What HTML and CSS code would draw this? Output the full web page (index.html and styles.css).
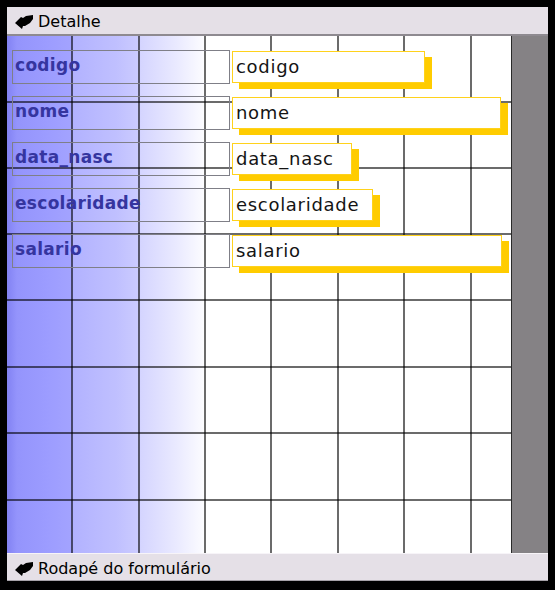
FILE: index.html
```html
<!DOCTYPE html>
<html lang="pt">
<head>
<meta charset="utf-8">
<title>Detalhe</title>
<link rel="stylesheet" href="styles.css">
</head>
<body>
<div class="frame">
  <div class="section-bar section-bar--top">
    <svg class="bar-icon" width="18" height="14" viewBox="0 0 18 14"><path d="M0 8 L6 2 L8 3 L11 1 L18 0 L18 4 L15 8 L10 11 L8 11 L7 14 Z" fill="#000"/></svg>
    <span class="bar-title">Detalhe</span>
  </div>
  <div class="canvas">
    <div class="grid">
      <div class="controls">
        <div class="row"><div class="label">codigo</div><div class="field field--codigo">codigo</div></div>
        <div class="row"><div class="label">nome</div><div class="field field--nome">nome</div></div>
        <div class="row"><div class="label">data_nasc</div><div class="field field--data">data_nasc</div></div>
        <div class="row"><div class="label">escolaridade</div><div class="field field--escol">escolaridade</div></div>
        <div class="row"><div class="label">salario</div><div class="field field--salario">salario</div></div>
      </div>
    </div>
    <div class="gutter"></div>
  </div>
  <div class="section-bar section-bar--bottom">
    <svg class="bar-icon" width="18" height="14" viewBox="0 0 18 14"><path d="M0 8 L6 2 L8 3 L11 1 L18 0 L18 4 L15 8 L10 11 L8 11 L7 14 Z" fill="#000"/></svg>
    <span class="bar-title">Rodapé do formulário</span>
  </div>
</div>
</body>
</html>
```

FILE: styles.css
```css
html, body {
  margin: 0;
  padding: 0;
  background: #000;
}

.frame {
  width: 555px;
  height: 590px;
  box-sizing: border-box;
  padding: 7px 7px 9px 7px;
  display: flex;
  flex-direction: column;
}

.section-bar {
  display: flex;
  align-items: flex-start;
  background: #e5e0e7;
  padding-left: 8px;
  font-family: "DejaVu Sans", Verdana, sans-serif;
  font-size: 16px;
  color: #000;
  flex: none;
}

.section-bar--top {
  height: 24px;
  padding-top: 3px;
  border-bottom: 2px solid #8e8a90;
}

.section-bar--bottom {
  height: 23px;
  padding-top: 3px;
  border-top: 1px solid #f7f4f8;
  border-bottom: 1px solid #a6a2a8;
}

.bar-icon {
  display: block;
  margin-top: 5px;
  flex: none;
}

.bar-title {
  line-height: 24px;
  margin-left: 5px;
  white-space: nowrap;
}

.canvas {
  flex: 1;
  display: flex;
  min-height: 0;
}

.grid {
  flex: 1;
  --line: rgba(0, 0, 0, 0.58);
  background-color: #fff;
  background-image:
    linear-gradient(var(--line), var(--line)),
    linear-gradient(var(--line), var(--line)),
    linear-gradient(var(--line), var(--line)),
    linear-gradient(var(--line), var(--line)),
    linear-gradient(var(--line), var(--line)),
    linear-gradient(var(--line), var(--line)),
    linear-gradient(var(--line), var(--line)),
    linear-gradient(var(--line), var(--line)),
    linear-gradient(var(--line), var(--line)),
    linear-gradient(var(--line), var(--line)),
    linear-gradient(var(--line), var(--line)),
    linear-gradient(var(--line), var(--line)),
    linear-gradient(var(--line), var(--line)),
    linear-gradient(var(--line), var(--line)),
    linear-gradient(to right, #8282f3 0px, #9494fc 10px, #9c9cff 40px, #a3a3ff 64px, #b2b2ff 66px, #c0c0ff 110px, #cbcbff 131px, #d5d5ff 134px, #eaeaff 170px, #fafaff 194px, #ffffff 198px);
  background-size:
    2px 100%, 2px 100%, 2px 100%, 2px 100%, 2px 100%, 2px 100%, 2px 100%,
    100% 2px, 100% 2px, 100% 2px, 100% 2px, 100% 2px, 100% 2px, 100% 2px,
    198px 100%;
  background-position:
    64px 0, 131px 0, 197px 0, 263px 0, 330px 0, 396px 0, 463px 0,
    0 65px, 0 131px, 0 197px, 0 263px, 0 330px, 0 396px, 0 463px,
    0 0;
  background-repeat: no-repeat;
}

.gutter {
  width: 36px;
  flex: none;
  background: #858285;
  border-left: 1px solid #2a2a2a;
}

.controls {
  display: flex;
  flex-direction: column;
  gap: 12px;
  padding: 14px 0 0 5px;
}

.row {
  display: flex;
  align-items: flex-start;
}

.label {
  width: 214px;
  height: 32px;
  border: 1px solid #7f7f87;
  padding-left: 2px;
  box-sizing: content-box;
  font-family: "DejaVu Sans", Verdana, sans-serif;
  font-weight: bold;
  font-size: 17px;
  letter-spacing: 0.3px;
  line-height: 28px;
  color: #35359f;
  flex: none;
}

.field {
  margin-left: 2px;
  margin-top: 1px;
  height: 30px;
  box-sizing: content-box;
  border: 1px solid #ffd21c;
  background: #fff;
  box-shadow: 7px 6px 0 #ffcc00;
  padding-left: 3px;
  font-family: "DejaVu Sans", Verdana, sans-serif;
  font-size: 18px;
  letter-spacing: 0.7px;
  line-height: 30px;
  color: #141414;
  white-space: nowrap;
  flex: none;
}

.field--codigo { width: 188px; }
.field--nome { width: 264px; }
.field--data { width: 115px; }
.field--escol { width: 136px; }
.field--salario { width: 265px; }
```
